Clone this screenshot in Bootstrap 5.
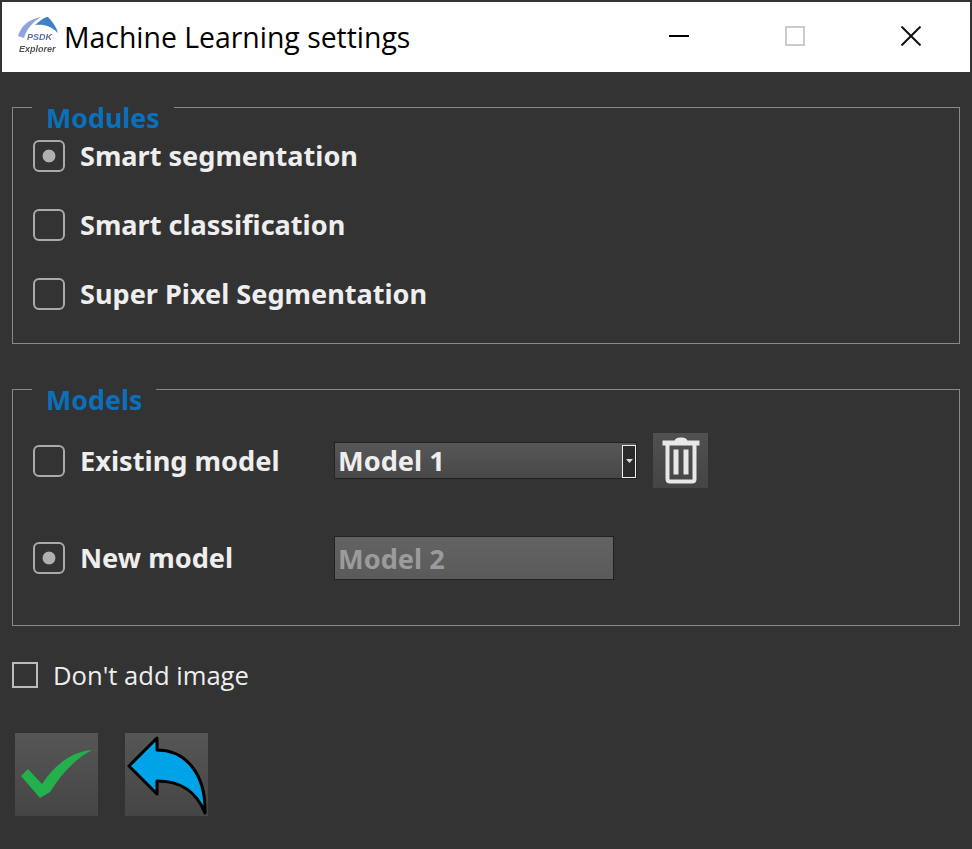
<!DOCTYPE html>
<html lang="en">
<head>
<meta charset="utf-8">
<title>Machine Learning settings</title>
<link href="https://cdn.jsdelivr.net/npm/bootstrap@5.3.0/dist/css/bootstrap.min.css" rel="stylesheet">
<style>
html, body { height: 100%; }
body { background: #333; overflow: hidden; font-family: "Noto Sans", "Open Sans", sans-serif; }
.win-title { margin: 2px 2px 0; height: 70px; background: #fff; color: #000; padding-right: 1px; }
.win-logo { width: 42px; height: 42px; margin-left: 15px; margin-right: 5px; }
.win-name { font-family: "Open Sans", sans-serif; font-size: 28.4px; line-height: 1; padding-top: 1px; }
.win-ctl { width: 116px; height: 70px; display: flex; align-items: center; justify-content: center; background: none; border: 0; padding: 0 0 2px; }
.win-ctl-mid { width: 115px; }
.win-ctl-end { width: 117px; }
.pane { padding: 35px 12px 0; }
.grp { border: 1px solid #888; height: 237px; padding: 0 20px; }
.grp + .grp { margin-top: 45px; }
.grp-head { width: fit-content; margin: -1px 0 11px -1px; padding: 0 14px; height: 22px; line-height: 22px; background: #333; color: #0a70bb; font-weight: 700; font-size: 26.8px; font-family: "Noto Sans", sans-serif; }
.grp-head-b { margin-bottom: 22px; }
.opt-row { height: 32px; margin-bottom: 37px; color: #eee; font-size: 27.1px; font-weight: 700; line-height: 1; }
.tick.form-check-input { width: 32px; height: 32px; margin: 0 15px 0 0; flex: none; background: transparent; border: 2.5px solid #aaa; border-radius: 6px; appearance: none; }
.tick.form-check-input:checked { background: radial-gradient(circle, #b0b0b0 0 6px, transparent 6.8px); border-color: #aaa; }
.tick.form-check-input:focus { box-shadow: none; }
.mod-row { color: #eee; font-size: 27.2px; font-weight: 700; }
.mod-row-a { height: 55px; margin-bottom: 48px; }
.mod-row-b { height: 44px; }
.mod-name { width: 254px; line-height: 1; }
.mod-select { width: 303px; height: 37px; border: 1px solid #222; background: linear-gradient(#575757, #484848); padding-left: 3px; margin-right: 16px; }
.mod-text { padding-top: 2px; }
.mod-arrow { width: 14px; height: 33px; margin: 1px 0 0; border: 1px solid #eee; background: #2a2a2a; display: flex; align-items: center; justify-content: center; }
.mod-input { width: 280px; height: 44px; border: 1px solid #222; background: linear-gradient(#636363, #5a5a5a); color: #9b9b9b; padding-left: 3px; }
.trash-btn { width: 55px; height: 55px; background: linear-gradient(#505050, #454545); border: 0; padding: 0; display: flex; align-items: center; justify-content: center; }
.plain-row { margin-top: 36px; height: 26px; color: #eee; font-family: "Open Sans", sans-serif; font-size: 25.6px; line-height: 1; }
.plain-text { padding-top: 2px; }
.plain-box.form-check-input { width: 26px; height: 26px; margin: 0 15px 0 0; flex: none; background: transparent; border: 2px solid #bbb; border-radius: 0; }
.act-row { margin: 45px 0 0 3px; gap: 27px; }
.act-btn { width: 83px; height: 83px; padding: 0; border: 0; background: linear-gradient(#565656, #454545); display: block; }
.act-btn svg { display: block; }
</style>
</head>
<body>
<div class="win-title d-flex align-items-center">
  <svg class="win-logo" viewBox="0 0 42 42">
    <defs><filter id="soft" x="-10%" y="-10%" width="120%" height="120%"><feGaussianBlur stdDeviation="0.45"/></filter></defs>
    <g filter="url(#soft)">
      <path d="M1 20 C4 10 12 3 24 1 C16 6 10 12 7 22 Z" fill="#8ea4dc"/>
      <path d="M18 9 C25 3 28 1 31 1 C35 5 39 10 41 17 C34 10 27 8 18 9 Z" fill="#3f80c6"/>
      <text x="10" y="24" font-family="Liberation Sans, sans-serif" font-size="9" font-weight="700" font-style="italic" fill="#5d6ea8">PSDK</text>
      <text x="2" y="36" font-family="Liberation Sans, sans-serif" font-size="9" font-weight="700" font-style="italic" fill="#555">Explorer</text>
    </g>
  </svg>
  <span class="win-name flex-grow-1">Machine Learning settings</span>
  <button class="win-ctl" aria-label="Minimize"><svg width="20" height="20"><rect y="9" width="20" height="2" fill="#000"/></svg></button>
  <button class="win-ctl win-ctl-mid" aria-label="Maximize"><svg width="20" height="20"><rect x="1" y="1" width="18" height="18" fill="none" stroke="#ccc" stroke-width="2"/></svg></button>
  <button class="win-ctl win-ctl-end" aria-label="Close"><svg width="20" height="20"><path d="M.5.5 19.5 19.5M19.5.5 .5 19.5" stroke="#111" stroke-width="2" fill="none"/></svg></button>
</div>
<div class="pane">
  <div class="grp">
    <div class="grp-head">Modules</div>
    <div class="opt-row d-flex align-items-center"><input class="tick form-check-input" type="radio" name="m1" checked><span>Smart segmentation</span></div>
    <div class="opt-row d-flex align-items-center"><input class="tick form-check-input" type="checkbox"><span>Smart classification</span></div>
    <div class="opt-row d-flex align-items-center"><input class="tick form-check-input" type="checkbox"><span>Super Pixel Segmentation</span></div>
  </div>
  <div class="grp">
    <div class="grp-head grp-head-b">Models</div>
    <div class="mod-row mod-row-a d-flex align-items-center">
      <input class="tick form-check-input" type="checkbox">
      <span class="mod-name">Existing model</span>
      <div class="mod-select d-flex align-items-center justify-content-between"><span class="mod-text">Model 1</span><span class="mod-arrow"><svg width="7" height="5"><path d="M0 0H7L3.5 4Z" fill="#ddd"/></svg></span></div>
      <button class="trash-btn" aria-label="Delete"><svg width="38" height="48" viewBox="0 0 38 48"><path d="M5.500 8V42Q5.500 44.500 8 44.500H30Q32.500 44.500 32.500 42V8" fill="none" stroke="#e8e8e8" stroke-width="4"/><path d="M.5 3.500H12.500Q14 .5 18 .5H20Q24 .5 25.500 3.500H37.500V8.500H.5Z" fill="#e8e8e8"/><path d="M14 12.500V37.500M24 12.500V37.500" stroke="#e8e8e8" stroke-width="5"/></svg></button>
    </div>
    <div class="mod-row mod-row-b d-flex align-items-center">
      <input class="tick form-check-input" type="radio" name="m2" checked>
      <span class="mod-name">New model</span>
      <div class="mod-input d-flex align-items-center"><span class="mod-text">Model 2</span></div>
    </div>
  </div>
  <div class="plain-row d-flex align-items-center"><input class="plain-box form-check-input" type="checkbox"><span class="plain-text">Don't add image</span></div>
  <div class="act-row d-flex">
    <button class="act-btn" aria-label="OK"><svg width="83" height="83" viewBox="0 0 83 83"><path d="M6 43 L13 36 L27 51 C39 33 55 19 77 17 C60 26 47 40 35 59 L25 65 Z" fill="#22b14c"/></svg></button>
    <button class="act-btn" aria-label="Back"><svg width="83" height="83" viewBox="0 0 83 83"><path d="M4 33 L32 5 V17 C60 17 81 40 80 80 C72 60 58 48 32 48 V61 Z" fill="#00a2e8" stroke="#000" stroke-width="3" stroke-linejoin="round"/></svg></button>
  </div>
</div>
<script src="https://cdn.jsdelivr.net/npm/bootstrap@5.3.0/dist/js/bootstrap.bundle.min.js"></script>
</body>
</html>
